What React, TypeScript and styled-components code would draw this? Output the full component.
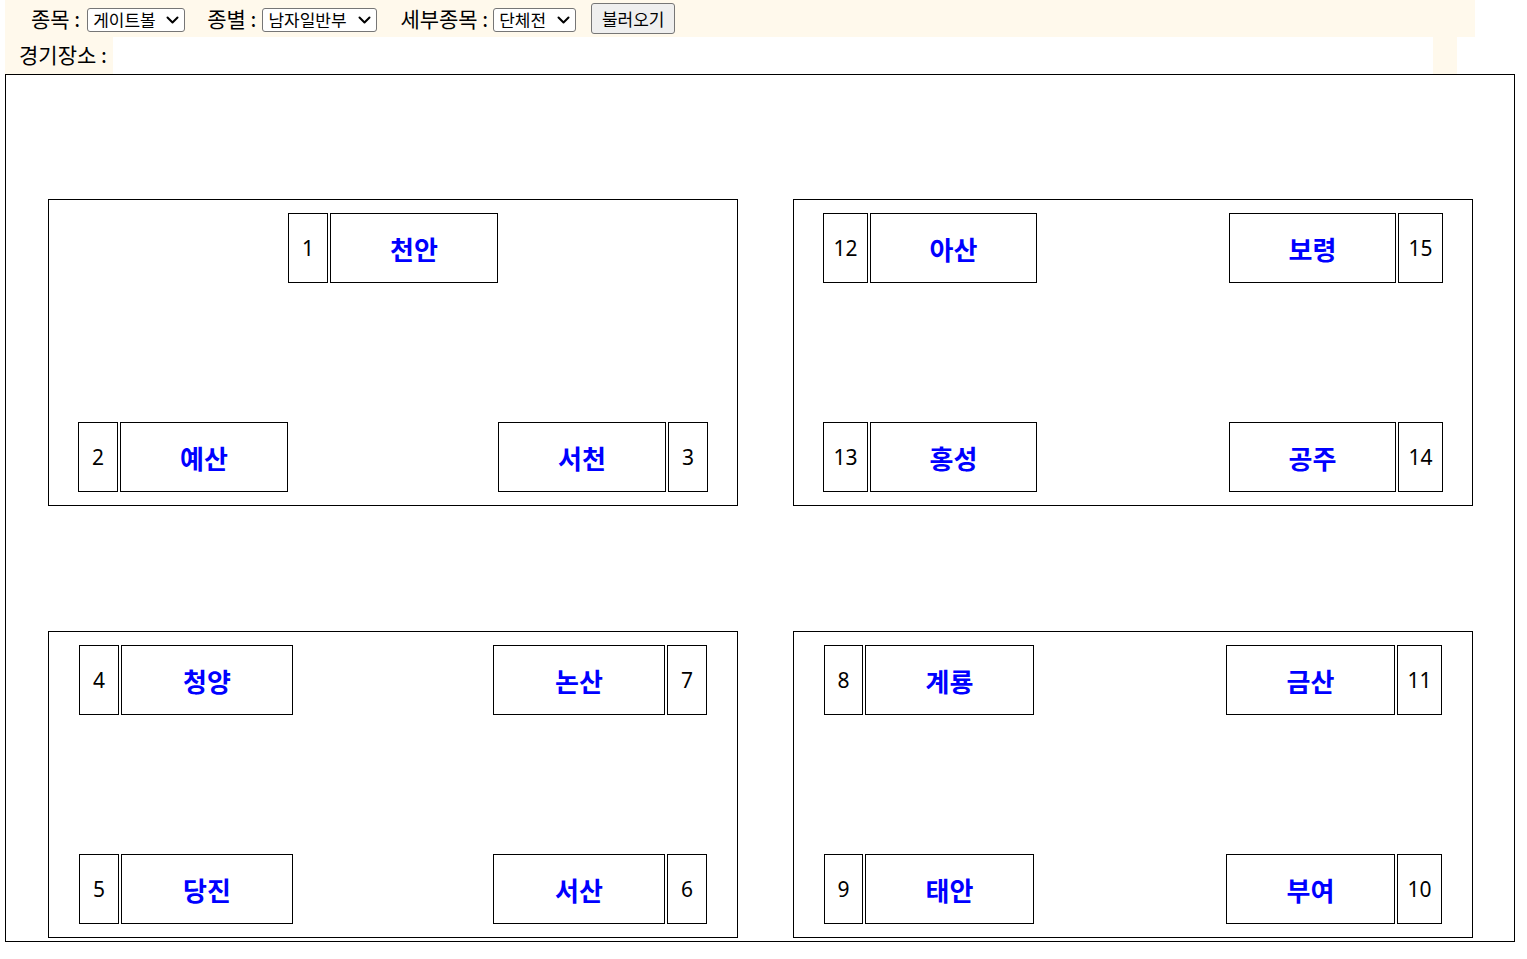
import React from "react";
import styled, { createGlobalStyle } from "styled-components";

const Global = createGlobalStyle`
  html, body { margin: 0; padding: 0; background: #ffffff; }
  body { font-family: "Noto Sans CJK KR", "Noto Sans", sans-serif; color: #000; }
`;

const CREAM = "#fff9ec";

const Page = styled.div`
  padding-left: 5px;
  width: 1510px;
`;

const TopBar = styled.div`
  width: 1470px;
  height: 37px;
  background: ${CREAM};
  display: flex;
  align-items: center;
  box-sizing: border-box;
  padding-left: 26px;
`;

const Field = styled.div<{ $gap: number }>`
  display: flex;
  align-items: center;
  margin-right: ${(p) => p.$gap}px;
`;

const Label = styled.span<{ $mr?: number }>`
  font-size: 21px;
  line-height: 1;
  margin-right: ${(p) => p.$mr ?? 5}px;
  white-space: nowrap;
`;

const SelectWrap = styled.div<{ $w: number }>`
  position: relative;
  width: ${(p) => p.$w}px;
  height: 24px;
  margin-top: 2px;
`;

const Select = styled.select`
  appearance: none;
  -webkit-appearance: none;
  width: 100%;
  height: 100%;
  box-sizing: border-box;
  font-family: "Noto Sans CJK KR", "Noto Sans", sans-serif;
  font-size: 17px;
  line-height: 1;
  padding: 0 0 0 5px;
  border: 1px solid #767676;
  border-radius: 3px;
  background: #fff;
  color: #000;
`;

const Chevron = styled.svg`
  position: absolute;
  right: 6px;
  top: 8px;
  width: 13px;
  height: 8px;
  pointer-events: none;
`;

const LoadButton = styled.button`
  width: 84px;
  height: 31px;
  margin-top: -1px;
  font-family: "Noto Sans CJK KR", "Noto Sans", sans-serif;
  font-size: 17px;
  background: #efefef;
  border: 1px solid #767676;
  border-radius: 3px;
  color: #000;
  padding: 0;
`;

const SecondRow = styled.div`
  width: 1452px;
  height: 37px;
  display: flex;
`;

const VenueLabel = styled.div`
  width: 108px;
  background: ${CREAM};
  display: flex;
  align-items: center;
  box-sizing: border-box;
  padding: 0 0 4px 14px;
  font-size: 21px;
  white-space: nowrap;
`;

const VenueValue = styled.div`
  flex: 1;
  background: #ffffff;
`;

const VenueEnd = styled.div`
  width: 24px;
  background: ${CREAM};
`;

const Arena = styled.div`
  width: 1510px;
  height: 868px;
  box-sizing: border-box;
  border: 1px solid #000;
  padding: 124px 41px 3px 42px;
  display: grid;
  grid-template-columns: 690px 680px;
  grid-template-rows: 307px 307px;
  column-gap: 55px;
  row-gap: 125px;
`;

const Court = styled.div<{ $px: number }>`
  box-sizing: border-box;
  border: 1px solid #000;
  padding: 13px ${(p) => p.$px}px;
  display: flex;
  flex-direction: column;
  justify-content: space-between;
`;

const CourtRow = styled.div<{ $center?: boolean }>`
  display: flex;
  justify-content: ${(p) => (p.$center ? "center" : "space-between")};
  height: 70px;
`;

const Pair = styled.div`
  display: flex;
  gap: 2px;
  height: 70px;
`;

const NumCell = styled.div<{ $w: number }>`
  width: ${(p) => p.$w}px;
  box-sizing: border-box;
  border: 1px solid #000;
  display: flex;
  align-items: center;
  justify-content: center;
  font-family: "Noto Sans", "Noto Sans CJK KR", sans-serif;
  font-size: 21px;
  color: #000;
`;

const NameCell = styled.div<{ $w: number }>`
  width: ${(p) => p.$w}px;
  box-sizing: border-box;
  border: 1px solid #000;
  display: flex;
  align-items: center;
  justify-content: center;
  font-size: 26px;
  font-weight: 700;
  color: #0000ff;
`;

type Team = { n: number; name: string; side: "L" | "R" };

const TeamPair: React.FC<{ t: Team; numW: number; nameW: number }> = ({ t, numW, nameW }) => {
  const nw = t.n >= 10 ? Math.max(numW, 45) : numW;
  return t.side === "L" ? (
    <Pair>
      <NumCell $w={nw}>{t.n}</NumCell>
      <NameCell $w={nameW}>{t.name}</NameCell>
    </Pair>
  ) : (
    <Pair>
      <NameCell $w={nameW}>{t.name}</NameCell>
      <NumCell $w={nw}>{t.n}</NumCell>
    </Pair>
  );
};

const Dropdown: React.FC<{ w: number; value: string }> = ({ w, value }) => (
  <SelectWrap $w={w}>
    <Select defaultValue={value}>
      <option>{value}</option>
    </Select>
    <Chevron viewBox="0 0 13 8">
      <path d="M1.5 1.5 L6.5 6.5 L11.5 1.5" fill="none" stroke="#000" strokeWidth="2" strokeLinecap="round" strokeLinejoin="round" />
    </Chevron>
  </SelectWrap>
);

type CourtData = {
  px: number;
  numW: number;
  nameW: number;
  top: Team[];
  bottom: Team[];
};

const courts: CourtData[] = [
  {
    px: 29,
    numW: 40,
    nameW: 168,
    top: [{ n: 1, name: "천안", side: "L" }],
    bottom: [
      { n: 2, name: "예산", side: "L" },
      { n: 3, name: "서천", side: "R" },
    ],
  },
  {
    px: 29,
    numW: 45,
    nameW: 167,
    top: [
      { n: 12, name: "아산", side: "L" },
      { n: 15, name: "보령", side: "R" },
    ],
    bottom: [
      { n: 13, name: "홍성", side: "L" },
      { n: 14, name: "공주", side: "R" },
    ],
  },
  {
    px: 30,
    numW: 40,
    nameW: 172,
    top: [
      { n: 4, name: "청양", side: "L" },
      { n: 7, name: "논산", side: "R" },
    ],
    bottom: [
      { n: 5, name: "당진", side: "L" },
      { n: 6, name: "서산", side: "R" },
    ],
  },
  {
    px: 30,
    numW: 39,
    nameW: 169,
    top: [
      { n: 8, name: "계룡", side: "L" },
      { n: 11, name: "금산", side: "R" },
    ],
    bottom: [
      { n: 9, name: "태안", side: "L" },
      { n: 10, name: "부여", side: "R" },
    ],
  },
];

export default function App() {
  return (
    <>
      <Global />
      <Page>
        <TopBar>
          <Field $gap={22}>
            <Label $mr={7}>종목 :</Label>
            <Dropdown w={98} value="게이트볼" />
          </Field>
          <Field $gap={23}>
            <Label $mr={6}>종별 :</Label>
            <Dropdown w={115} value="남자일반부" />
          </Field>
          <Field $gap={15}>
            <Label $mr={5}>세부종목 :</Label>
            <Dropdown w={83} value="단체전" />
          </Field>
          <LoadButton>불러오기</LoadButton>
        </TopBar>
        <SecondRow>
          <VenueLabel>경기장소 :</VenueLabel>
          <VenueValue />
          <VenueEnd />
        </SecondRow>
        <Arena>
          {courts.map((c, i) => (
            <Court key={i} $px={c.px}>
              <CourtRow $center={c.top.length === 1}>
                {c.top.map((t) => (
                  <TeamPair key={t.n} t={t} numW={c.numW} nameW={c.nameW} />
                ))}
              </CourtRow>
              <CourtRow>
                {c.bottom.map((t) => (
                  <TeamPair key={t.n} t={t} numW={c.numW} nameW={c.nameW} />
                ))}
              </CourtRow>
            </Court>
          ))}
        </Arena>
      </Page>
    </>
  );
}
